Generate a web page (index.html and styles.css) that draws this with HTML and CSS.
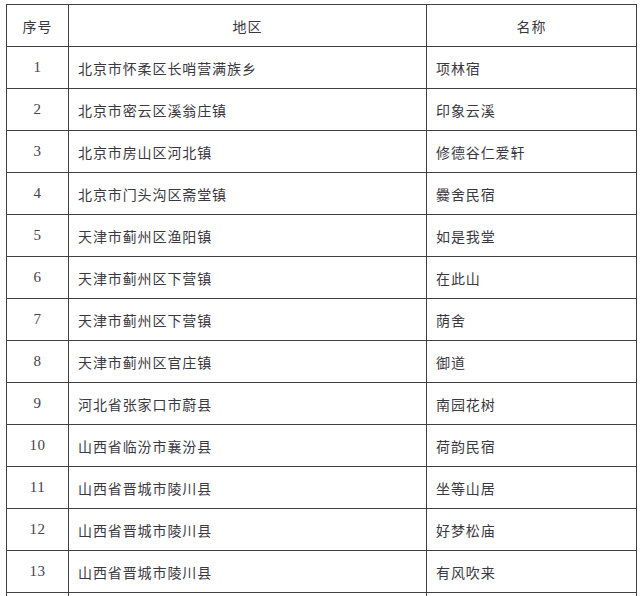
FILE: index.html
```html
<!DOCTYPE html>
<html lang="zh-CN">
<head>
<meta charset="utf-8">
<title>名单</title>
<link rel="stylesheet" href="styles.css">
</head>
<body>
<table class="list">
  <colgroup>
    <col class="c-no">
    <col class="c-area">
    <col class="c-name">
  </colgroup>
  <thead>
    <tr><th>序号</th><th>地区</th><th>名称</th></tr>
  </thead>
  <tbody>
    <tr><td class="no">1</td><td>北京市怀柔区长哨营满族乡</td><td>项林宿</td></tr>
    <tr><td class="no">2</td><td>北京市密云区溪翁庄镇</td><td>印象云溪</td></tr>
    <tr><td class="no">3</td><td>北京市房山区河北镇</td><td>修德谷仁爱轩</td></tr>
    <tr><td class="no">4</td><td>北京市门头沟区斋堂镇</td><td>爨舍民宿</td></tr>
    <tr><td class="no">5</td><td>天津市蓟州区渔阳镇</td><td>如是我堂</td></tr>
    <tr><td class="no">6</td><td>天津市蓟州区下营镇</td><td>在此山</td></tr>
    <tr><td class="no">7</td><td>天津市蓟州区下营镇</td><td>荫舍</td></tr>
    <tr><td class="no">8</td><td>天津市蓟州区官庄镇</td><td>御道</td></tr>
    <tr><td class="no">9</td><td>河北省张家口市蔚县</td><td>南园花树</td></tr>
    <tr><td class="no">10</td><td>山西省临汾市襄汾县</td><td>荷韵民宿</td></tr>
    <tr><td class="no">11</td><td>山西省晋城市陵川县</td><td>坐等山居</td></tr>
    <tr><td class="no">12</td><td>山西省晋城市陵川县</td><td>好梦松庙</td></tr>
    <tr><td class="no">13</td><td>山西省晋城市陵川县</td><td>有风吹来</td></tr>
    <tr class="cut"><td class="no"></td><td></td><td></td></tr>
  </tbody>
</table>
</body>
</html>
```

FILE: styles.css
```css
html, body {
  margin: 0;
  padding: 0;
  background: #ffffff;
  overflow: hidden;
}

body {
  padding: 4px 0 0 6px;
  font-family: "Noto Sans CJK SC", "Noto Sans", sans-serif;
  color: #3b3842;
}

.list {
  border-collapse: collapse;
  table-layout: fixed;
  width: 630px;
}

.c-no { width: 62px; }
.c-area { width: 358px; }
.c-name { width: 210px; }

.list th,
.list td {
  border: 1px solid #404040;
  height: 41px;
  padding: 0 0 0 9px;
  font-size: 14px;
  font-weight: 400;
  letter-spacing: 0.9px;
  text-align: left;
  vertical-align: middle;
  line-height: 1;
}

.list th {
  text-align: center;
  padding: 0;
}

.list td.no {
  text-align: center;
  padding: 0;
  font-family: "Liberation Serif", "DejaVu Serif", serif;
  font-size: 15px;
  letter-spacing: 0.5px;
  color: #45424b;
}
```
